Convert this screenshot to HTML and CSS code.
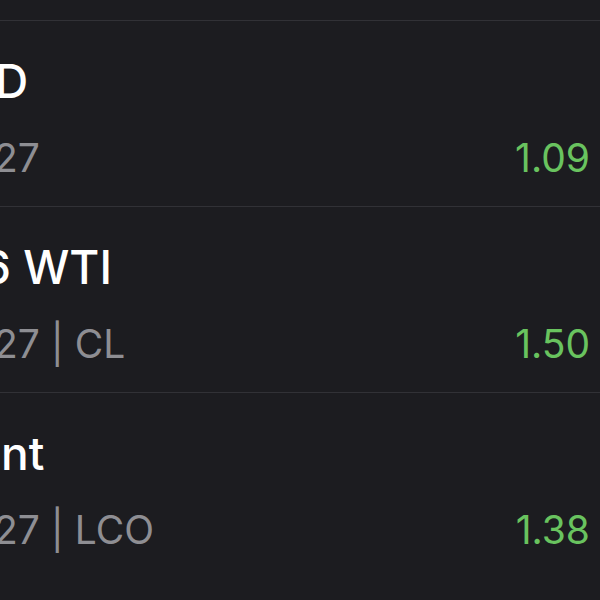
FILE: index.html
```html
<!DOCTYPE html>
<html>
<head>
	<meta charset="utf-8">
	<title>Watchlist</title>
	<link rel="stylesheet" href="styles.css">
</head>
<body>

	<div class="list">
		<div class="row row-first">
			<div class="name">D</div>
			<div class="line">
				<span class="sub">27</span>
				<span class="change">1.09</span>
			</div>
		</div>

		<div class="row row-wti">
			<div class="name">6 WTI</div>
			<div class="line">
				<span class="sub">27 | CL</span>
				<span class="change">1.50</span>
			</div>
		</div>

		<div class="row row-brent">
			<div class="name">ent</div>
			<div class="line">
				<span class="sub">27 | LCO</span>
				<span class="change">1.38</span>
			</div>
		</div>
	</div>

</body>
</html>
```

FILE: styles.css
```css
html, body {
	margin: 0;
	height: 600px;
	overflow: hidden;
	background-color: #1c1c20;
}

body {
	font-family: Inter, "Noto Sans", sans-serif;
	color: #ffffff;
}

.list {
	padding-top: 20px;
}

.row {
	border-top: 1px solid #313136;
	padding-top: 32px;
	padding-right: 10px;
	box-sizing: border-box;
	height: 186px;
}

.name {
	font-size: 46px;
	line-height: 56px;
	font-weight: 500;
	white-space: nowrap;
}

.line {
	display: flex;
	justify-content: space-between;
	align-items: baseline;
	margin-top: 25px;
	font-size: 39px;
	line-height: 48px;
}

.sub {
	color: #8e8e93;
	white-space: nowrap;
	margin-left: -6px;
}

.change {
	color: #69c35f;
}

/* how much of each name is scrolled off the left edge */
.row-first .name { margin-left: -5px; }
.row-wti .name { margin-left: -18px; }
.row-brent .name { margin-left: -26px; }
```
